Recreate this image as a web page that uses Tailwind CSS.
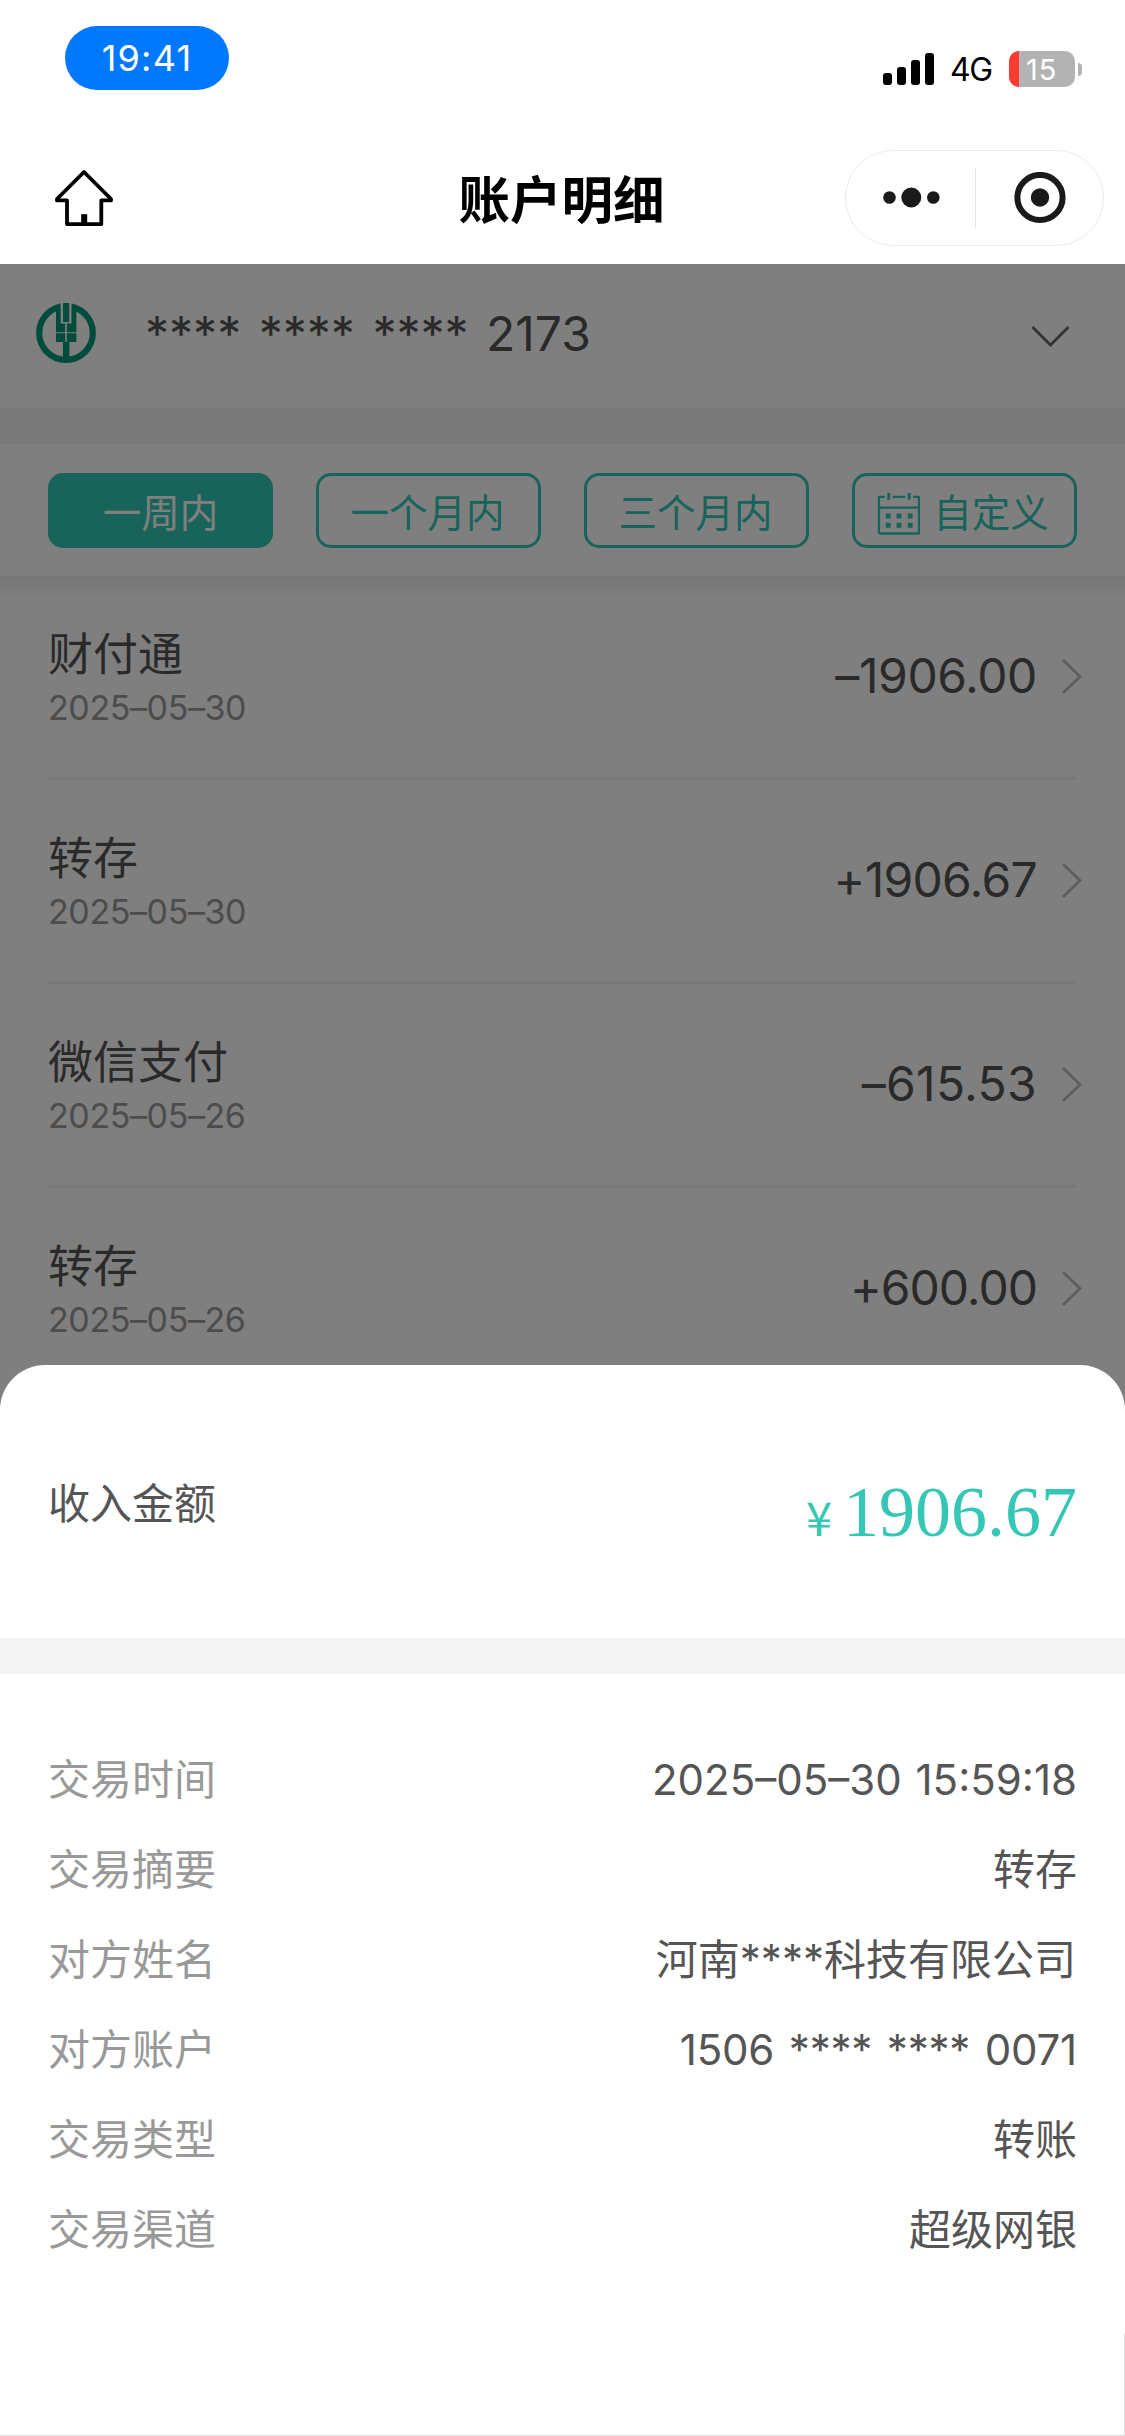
<!DOCTYPE html>
<html lang="zh-CN">
<head>
<meta charset="utf-8">
<meta name="viewport" content="width=device-width, initial-scale=1">
<title>账户明细</title>
<script src="https://cdn.jsdelivr.net/npm/@tailwindcss/browser@4"></script>
</head>
<body class="bg-white">
<div class="relative flex h-[2436px] w-[1125px] flex-col overflow-hidden bg-white font-['Inter','Noto_Sans_CJK_SC',sans-serif] text-[#555]">

  <!-- Status bar -->
  <div class="flex h-[120px] shrink-0 items-start justify-between pl-[65px] pr-[43px]">
    <div class="mt-[26px] flex h-16 w-[164px] items-center justify-center rounded-[32px] bg-[#0078ff] text-[36px] leading-none tracking-[1.2px] text-white">19:41</div>
    <div class="mt-[51px] flex h-9 items-center">
      <svg class="h-8 w-[51px]" viewBox="0 0 51 32"><rect x="0" y="20" width="9" height="12" rx="3"/><rect x="14" y="14" width="9" height="18" rx="3"/><rect x="28" y="7" width="9" height="25" rx="3"/><rect x="42" y="0" width="9" height="32" rx="3"/></svg>
      <span class="ml-[16px] w-[43px] pt-[2px] text-[32px] leading-none tracking-[-1.5px] text-black">4G</span>
      <div class="ml-4 flex h-9 w-[66px] overflow-hidden rounded-[10px] bg-[#b3b3b3]">
        <div class="w-[10px] bg-[#ff3b30]"></div>
        <span class="flex flex-1 items-center pl-[7px] text-[29px] leading-none tracking-[1px] text-white">15</span>
      </div>
      <div class="ml-[3px] h-[13px] w-[4px] rounded-r-full bg-[#b3b3b3]"></div>
    </div>
  </div>

  <!-- Navigation bar -->
  <header class="grid h-36 shrink-0 grid-cols-[280px_1fr_280px]">
    <div class="pl-[54px] pt-[49px]">
      <svg class="h-[58px] w-[60px]" viewBox="0 0 60 58" fill="none" stroke="#000" stroke-width="3.8" stroke-linejoin="round"><path d="M30 3 L57 30 V31.4 H47.3 V55.2 H13 V31.4 H3 V30 Z"/><path d="M30.2 55 V45.2" stroke-width="6"/></svg>
    </div>
    <h1 class="pt-[54px] pr-[2px] text-center text-[51.5px] leading-[52px] font-bold text-black">账户明细</h1>
    <div class="flex justify-end pr-[21px] pt-[30px]">
      <div class="flex h-24 w-[259px] items-center rounded-full border border-[#ebebeb]">
        <svg class="h-6 w-[129px]" viewBox="0 0 129 24" fill="#1a1a1a"><circle cx="43.500" cy="11.500" r="6.3"/><circle cx="65.300" cy="11.500" r="10"/><circle cx="87.300" cy="11.500" r="6.3"/></svg>
        <div class="h-[60px] w-px bg-[#e2e2e2]"></div>
        <svg class="h-[52px] w-[127px]" viewBox="0 0 127 52"><circle cx="64" cy="25.500" r="22.6" fill="none" stroke="#1a1a1a" stroke-width="6"/><circle cx="64" cy="25.500" r="9.2" fill="#1a1a1a"/></svg>
      </div>
    </div>
  </header>

  <!-- Dimmed page content -->
  <main class="relative flex-1">
    <section class="flex h-36 items-start pl-9 pr-[55px]">
      <svg class="mt-[39px] h-[60px] w-[60px]" viewBox="0 0 60 60">
        <circle cx="30" cy="30" r="26.8" fill="none" stroke="#009878" stroke-width="6.2"/>
        <path d="M24.6 0H35.6V20H24.6Z" fill="#fff"/>
        <path d="M20 6H24.7V20.5H29.2V29.2H20ZM40.4 6H35.5V20.5H30.8V29.2H40.4ZM20 30.2H29.2V39H20ZM30.8 30.2H40.4V39H30.8ZM27 39H33.4V57H27ZM27.6 0H32.6Q33.2 0 33.2 1V19H27V1Q27 0 27.6 0Z" fill="#009878"/>
      </svg>
      <div class="ml-[49px] mt-[41px] text-[48px] leading-[58px] [word-spacing:4px]">**** **** **** 2173</div>
      <svg class="ml-auto mt-[60px] h-6 w-10" viewBox="0 0 40 24" fill="none" stroke="#666" stroke-width="2.8"><path d="M2.5 3L20.5 21L38.5 3"/></svg>
    </section>
    <div class="h-9 bg-[#f0f0f0]"></div>
    <nav class="grid h-[132px] grid-cols-4 gap-[43px] px-12 pt-[29px] text-[38.5px] leading-none">
      <div class="flex h-[75px] items-center justify-center rounded-[15px] bg-[#32c8b4] pt-1.5 text-white">一周内</div>
      <div class="flex h-[75px] items-center justify-center rounded-[15px] border-3 border-[#32c8b4] pt-1.5 pr-[2px] text-[#32c8b4]">一个月内</div>
      <div class="flex h-[75px] items-center justify-center rounded-[15px] border-3 border-[#32c8b4] pt-1.5 pr-[2px] text-[#32c8b4]">三个月内</div>
      <div class="flex h-[75px] items-center justify-center rounded-[15px] border-3 border-[#32c8b4] pr-[3px] text-[#32c8b4]">
        <svg class="mt-1.5 mr-[13px] h-[43px] w-[43px]" viewBox="0 0 44 44" fill="none" stroke="#32c8b4" stroke-width="2.4"><path d="M8 5H3Q2 5 2 6V41.5Q2 42.5 3 42.5H42Q43 42.5 43 41.5V6Q43 5 42 5H37M16 5H29M2 16H43"/><path d="M12 1V8M33 1V8" stroke-width="3"/><path d="M9 24.5h5M20 24.5h5M31.500 24.5h5M9 34h5M20 34h5M31.500 34h5" stroke-width="5"/></svg>
        <span class="pt-1.5">自定义</span>
      </div>
    </nav>
    <div class="relative">
      <div class="absolute inset-x-0 top-0 h-6 bg-linear-to-b from-black/7 to-transparent"></div>
      <ul class="px-12">
        <li class="flex h-[204px] items-start justify-between border-b-3 border-[#f0f0f0]">
          <div class="pt-[52px]"><p class="text-[45px] leading-[54px]">财付通</p><p class="mt-[5px] text-[34px] leading-[42px] tracking-[-0.4px] text-[#999]">2025–05–30</p></div>
          <div class="-mr-[6px] flex items-center pt-[71px] text-[48px] leading-[58px] tracking-[-0.4px]">–1906.00<svg class="ml-6 h-9 w-[22px]" viewBox="0 0 22 36" fill="none" stroke="#bbb" stroke-width="2.8"><path d="M2 2L19 18.500L2 35"/></svg></div>
        </li>
        <li class="flex h-[204px] items-start justify-between border-b-3 border-[#f0f0f0]">
          <div class="pt-[52px]"><p class="text-[45px] leading-[54px]">转存</p><p class="mt-[5px] text-[34px] leading-[42px] tracking-[-0.4px] text-[#999]">2025–05–30</p></div>
          <div class="-mr-[6px] flex items-center pt-[71px] text-[48px] leading-[58px] tracking-[-0.7px]">+1906.67<svg class="ml-6 h-9 w-[22px]" viewBox="0 0 22 36" fill="none" stroke="#bbb" stroke-width="2.8"><path d="M2 2L19 18.500L2 35"/></svg></div>
        </li>
        <li class="flex h-[204px] items-start justify-between border-b-3 border-[#f0f0f0]">
          <div class="pt-[52px]"><p class="text-[45px] leading-[54px]">微信支付</p><p class="mt-[5px] text-[34px] leading-[42px] tracking-[-0.4px] text-[#999]">2025–05–26</p></div>
          <div class="-mr-[6px] flex items-center pt-[71px] text-[48px] leading-[58px] tracking-[0.3px]">–615.53<svg class="ml-6 h-9 w-[22px]" viewBox="0 0 22 36" fill="none" stroke="#bbb" stroke-width="2.8"><path d="M2 2L19 18.500L2 35"/></svg></div>
        </li>
        <li class="flex h-[204px] items-start justify-between">
          <div class="pt-[52px]"><p class="text-[45px] leading-[54px]">转存</p><p class="mt-[5px] text-[34px] leading-[42px] tracking-[-0.4px] text-[#999]">2025–05–26</p></div>
          <div class="-mr-[6px] flex items-center pt-[71px] text-[48px] leading-[58px] tracking-[-1px]">+600.00<svg class="ml-6 h-9 w-[22px]" viewBox="0 0 22 36" fill="none" stroke="#bbb" stroke-width="2.8"><path d="M2 2L19 18.500L2 35"/></svg></div>
        </li>
      </ul>
    </div>
    <div class="absolute inset-0 bg-black/50"></div>
  </main>

  <!-- Transaction detail sheet -->
  <section class="absolute inset-x-0 bottom-0 h-[1071px] rounded-t-[45px] border-b border-[#e0e0e0] bg-white text-[42px] leading-[60px]">
    <div class="flex h-[273px] items-start justify-between px-12">
      <span class="pt-[109px]">收入金额</span>
      <div class="flex items-baseline pt-[102px] text-[#35c7b5]">
        <span class="mr-[11px] font-['Noto_Sans_CJK_SC',sans-serif] text-[47px]">¥</span>
        <span class="font-['Liberation_Serif',serif] text-[72px] leading-[90px]">1906.67</span>
      </div>
    </div>
    <div class="h-9 bg-[#f4f4f4]"></div>
    <dl class="flex flex-col gap-[30px] px-12 pt-[76px]">
      <div class="flex h-[60px] justify-between"><dt class="text-[#999]">交易时间</dt><dd class="[word-spacing:2px]">2025–05–30 15:59:18</dd></div>
      <div class="flex h-[60px] justify-between"><dt class="text-[#999]">交易摘要</dt><dd>转存</dd></div>
      <div class="flex h-[60px] justify-between"><dt class="text-[#999]">对方姓名</dt><dd class="pr-[1px]">河南****科技有限公司</dd></div>
      <div class="flex h-[60px] justify-between"><dt class="text-[#999]">对方账户</dt><dd class="tracking-[-0.2px] [word-spacing:3px]">1506 **** **** 0071</dd></div>
      <div class="flex h-[60px] justify-between"><dt class="text-[#999]">交易类型</dt><dd>转账</dd></div>
      <div class="flex h-[60px] justify-between"><dt class="text-[#999]">交易渠道</dt><dd>超级网银</dd></div>
    </dl>
    <div class="absolute right-0 bottom-0 h-[102px] w-px bg-[#e0e0e0]"></div>
  </section>
</div>
</body>
</html>
